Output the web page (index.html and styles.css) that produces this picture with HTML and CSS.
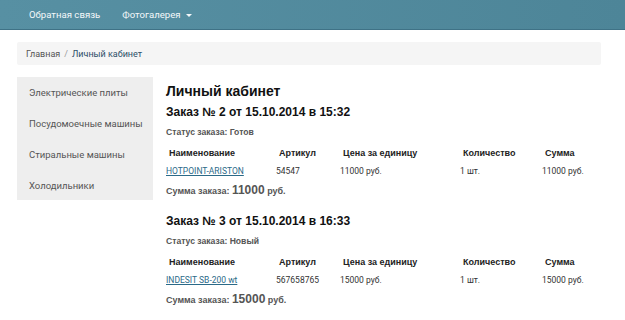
FILE: index.html
```html
<!DOCTYPE html>
<html lang="ru">
  <head>
    <meta charset="UTF-8" />
    <title>Личный кабинет</title>
    <link rel="stylesheet" href="styles.css">
  </head>
  <body>
    <header class="navbar">
      <ul class="nav">
        <li><a href="#">Обратная связь</a></li>
        <li><a href="#">Фотогалерея <span class="caret"></span></a></li>
      </ul>
    </header>

    <div class="container">
      <ol class="breadcrumb">
        <li><a href="#">Главная</a></li>
        <li class="active">Личный кабинет</li>
      </ol>

      <div class="row">
        <aside class="sidebar">
          <a href="#">Электрические плиты</a>
          <a href="#">Посудомоечные машины</a>
          <a href="#">Стиральные машины</a>
          <a href="#">Холодильники</a>
        </aside>

        <main class="content">
          <h1>Личный кабинет</h1>

          <section class="order">
            <h2>Заказ № 2 от 15.10.2014 в 15:32</h2>
            <p class="status">Статус заказа: Готов</p>
            <table class="order-table">
              <tr>
                <th>Наименование</th>
                <th>Артикул</th>
                <th>Цена за единицу</th>
                <th>Количество</th>
                <th>Сумма</th>
              </tr>
              <tr>
                <td><a href="#">HOTPOINT-ARISTON</a></td>
                <td>54547</td>
                <td>11000 руб.</td>
                <td>1 шт.</td>
                <td>11000 руб.</td>
              </tr>
            </table>
            <p class="total">Сумма заказа: <span>11000</span> руб.</p>
          </section>

          <section class="order">
            <h2>Заказ № 3 от 15.10.2014 в 16:33</h2>
            <p class="status">Статус заказа: Новый</p>
            <table class="order-table">
              <tr>
                <th>Наименование</th>
                <th>Артикул</th>
                <th>Цена за единицу</th>
                <th>Количество</th>
                <th>Сумма</th>
              </tr>
              <tr>
                <td><a href="#">INDESIT SB-200 wt</a></td>
                <td>567658765</td>
                <td>15000 руб.</td>
                <td>1 шт.</td>
                <td>15000 руб.</td>
              </tr>
            </table>
            <p class="total">Сумма заказа: <span>15000</span> руб.</p>
          </section>
        </main>
      </div>
    </div>
  </body>
</html>
```

FILE: styles.css
```css
* {
  margin: 0;
  padding: 0;
  box-sizing: border-box;
}
body {
  font-family: Roboto, "Open Sans", sans-serif;
  font-size: 10px;
  color: #555;
  background: #fff;
}
a {
  text-decoration: none;
  color: inherit;
}
.navbar {
  height: 30px;
  background: linear-gradient(to right, #5790a3, #4d8598);
  border-bottom: 1px solid #3f7286;
}
.nav {
  list-style: none;
  display: flex;
  padding-left: 29px;
  gap: 22px;
}
.nav a {
  display: block;
  line-height: 29px;
  color: #f4f8fa;
  font-size: 9.6px;
}
.caret {
  display: inline-block;
  width: 0;
  height: 0;
  margin-left: 3px;
  vertical-align: middle;
  border-top: 3px solid #f4f8fa;
  border-left: 3px solid transparent;
  border-right: 3px solid transparent;
}
.container {
  padding: 12px 24px 0 17px;
}
.breadcrumb {
  list-style: none;
  display: flex;
  height: 23px;
  align-items: center;
  padding-left: 9px;
  background: #f5f5f5;
  border-radius: 2px;
  font-size: 9px;
  color: #2d4f68;
}
.breadcrumb li + li::before {
  content: "/";
  padding: 0 4px;
  color: #999;
}
.breadcrumb a {
  color: #555;
}
.row {
  display: flex;
  align-items: flex-start;
  margin-top: 12px;
  gap: 13px;
}
.sidebar {
  width: 136px;
  background: #eee;
  display: flex;
  flex-direction: column;
  gap: 15px;
  padding: 8px 0 6px 12px;
}
.sidebar a {
  line-height: 16px;
  font-size: 9.5px;
  color: #555;
  white-space: nowrap;
}
.content {
  flex: 1;
  color: #333;
}
h1 {
  font-family: "Liberation Sans", Arial, sans-serif;
  font-size: 14px;
  color: #111;
  margin-top: 6px;
  line-height: 16px;
}
h2 {
  font-family: "Liberation Sans", Arial, sans-serif;
  font-size: 12px;
  color: #111;
  line-height: 14px;
  margin-top: 6px;
}
.order + .order {
  margin-top: 17px;
}
.status {
  font-family: "Liberation Sans", Arial, sans-serif;
  font-weight: bold;
  font-size: 8.6px;
  color: #555;
  margin-top: 8px;
}
.order-table {
  width: 100%;
  border-collapse: collapse;
  table-layout: fixed;
  margin-top: 11px;
}
.order-table th:nth-child(1) {
  width: 110px;
}
.order-table th:nth-child(2) {
  width: 64px;
}
.order-table th:nth-child(3) {
  width: 120px;
}
.order-table th:nth-child(4) {
  width: 82px;
}
.order-table th {
  font-family: "Liberation Sans", Arial, sans-serif;
  font-size: 9px;
  color: #222;
  text-align: left;
  padding: 0 0 6px 3px;
  line-height: 11px;
}
.order-table td {
  font-size: 8.5px;
  color: #333;
  text-align: left;
  padding: 0;
  line-height: 12px;
  white-space: nowrap;
}
.order-table td a {
  color: #2b6a88;
  text-decoration: underline;
}
.total {
  font-family: "Liberation Sans", Arial, sans-serif;
  font-weight: bold;
  font-size: 9px;
  color: #555;
  margin-top: 6px;
}
.total span {
  font-size: 12px;
}
```
